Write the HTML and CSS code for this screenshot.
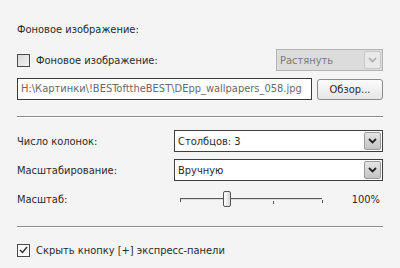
FILE: index.html
```html
<!DOCTYPE html>
<html lang="ru">
<head>
  <meta charset="UTF-8">
  <title>Фоновое изображение</title>
  <link rel="stylesheet" href="styles.css">
</head>
<body>
  <div class="panel">
    <div class="title">Фоновое изображение:</div>

    <div class="row row-bg">
      <label class="check">
        <span class="box"></span>
        <span>Фоновое изображение:</span>
      </label>
      <div class="select disabled">
        <span class="value">Растянуть</span>
        <span class="drop">
          <svg width="9" height="6" viewBox="0 0 9 6"><path d="M1 1l3.5 3.5L8 1" fill="none" stroke="currentColor" stroke-width="1.6"/></svg>
        </span>
      </div>
    </div>

    <div class="row row-file">
      <div class="input">H:\Картинки\!BESTofttheBEST\DEpp_wallpapers_058.jpg</div>
      <div class="button">Обзор...</div>
    </div>

    <div class="sep"></div>

    <div class="grid">
      <div class="label">Число колонок:</div>
      <div class="select">
        <span class="value">Столбцов: 3</span>
        <span class="drop">
          <svg width="9" height="6" viewBox="0 0 9 6"><path d="M1 1l3.5 3.5L8 1" fill="none" stroke="currentColor" stroke-width="1.8"/></svg>
        </span>
      </div>

      <div class="label">Масштабирование:</div>
      <div class="select">
        <span class="value">Вручную</span>
        <span class="drop">
          <svg width="9" height="6" viewBox="0 0 9 6"><path d="M1 1l3.5 3.5L8 1" fill="none" stroke="currentColor" stroke-width="1.8"/></svg>
        </span>
      </div>

      <div class="label">Масштаб:</div>
      <div class="scale">
        <div class="slider">
          <div class="track"></div>
          <span class="tick t0"></span>
          <span class="tick t1"></span>
          <span class="tick t2"></span>
          <span class="thumb"></span>
        </div>
        <span class="percent">100%</span>
      </div>
    </div>

    <div class="sep sep2"></div>

    <label class="check row-last">
      <span class="box checked">
        <svg width="9" height="8" viewBox="0 0 9 8"><path d="M1 4l2.5 2.5L8 1" fill="none" stroke="#333" stroke-width="1.5"/></svg>
      </span>
      <span>Скрыть кнопку [+] экспресс-панели</span>
    </label>
  </div>
</body>
</html>
```

FILE: styles.css
```css
body {
  margin: 0;
  background-color: #f4f4f4;
  font-family: "DejaVu Sans Condensed", "DejaVu Sans", sans-serif;
  font-size: 11px;
  color: #2b2b2b;
}

.panel {
  display: flex;
  flex-direction: column;
  padding: 0 17px;
}

.title {
  margin-top: 22px;
  height: 16px;
  line-height: 16px;
}

.row {
  display: flex;
  align-items: center;
}

.row-bg {
  margin-top: 11px;
  height: 22px;
  justify-content: space-between;
}

.row-file {
  margin-top: 7px;
  height: 22px;
  gap: 5px;
}

.check {
  display: flex;
  align-items: center;
  gap: 6px;
}

.box {
  width: 11px;
  height: 11px;
  border: 1px solid #4a4a4a;
  background: linear-gradient(135deg, #d8d8d8, #f2f2f2);
  display: flex;
  align-items: center;
  justify-content: center;
}

.box.checked {
  background: #fafafa;
}

.select {
  display: flex;
  align-items: center;
  height: 20px;
  border: 1px solid #3e3e3e;
  background: #fff;
}

.select .value {
  flex: 1;
  padding-left: 3px;
}

.select .drop {
  width: 15px;
  height: 16px;
  margin-right: 1px;
  border: 1px solid #9a9a9a;
  border-radius: 2px;
  background: linear-gradient(#e4e4e4, #c4c4c4);
  color: #222;
  display: flex;
  align-items: center;
  justify-content: center;
}

.select.disabled {
  width: 105px;
  border-color: #b4b4b4;
  background: #dcdcdc;
  color: #7a7a7a;
}

.select.disabled .drop {
  background: #e8e8e8;
  border-color: #c8c8c8;
  color: #aaa;
}

.input {
  flex: 1;
  height: 20px;
  line-height: 20px;
  border: 1px solid #3a3a3a;
  background: #fff;
  color: #6a6a6a;
  padding-left: 3px;
  white-space: nowrap;
  overflow: hidden;
}

.button {
  width: 64px;
  height: 19px;
  line-height: 19px;
  border: 1px solid #8a8a8a;
  border-radius: 3px;
  background: linear-gradient(#fbfbfb, #e6e6e6);
  text-align: center;
}

.sep {
  margin-top: 16px;
  height: 1px;
  background: #8c8c8c;
  border-bottom: 1px solid #fff;
}

.grid {
  margin-top: 12px;
  display: grid;
  grid-template-columns: 157px 1fr;
  grid-auto-rows: 22px;
  row-gap: 7px;
  align-items: center;
}

.scale {
  display: flex;
  align-items: center;
  height: 22px;
  margin-top: 1px;
}

.slider {
  position: relative;
  width: 150px;
  height: 22px;
}

.track {
  position: absolute;
  left: 6px;
  right: 2px;
  top: 9px;
  height: 1px;
  background: #5a5a5a;
  border-bottom: 1px solid #ddd;
}

.tick {
  position: absolute;
  top: 12px;
  width: 1px;
  height: 3px;
  background: #555;
}

.t0 { left: 6px; top: 10px; }
.t1 { left: 99px; }
.t2 { left: 148px; top: 11px; }

.thumb {
  position: absolute;
  left: 49px;
  top: 2px;
  width: 6px;
  height: 14px;
  border: 1px solid #555;
  border-radius: 2px;
  background: linear-gradient(90deg, #fff, #d8d8d8);
}

.percent {
  margin-left: auto;
  margin-right: 3px;
}

.sep2 {
  margin-top: 16px;
}

.row-last {
  margin-top: 14px;
  height: 16px;
}
```
